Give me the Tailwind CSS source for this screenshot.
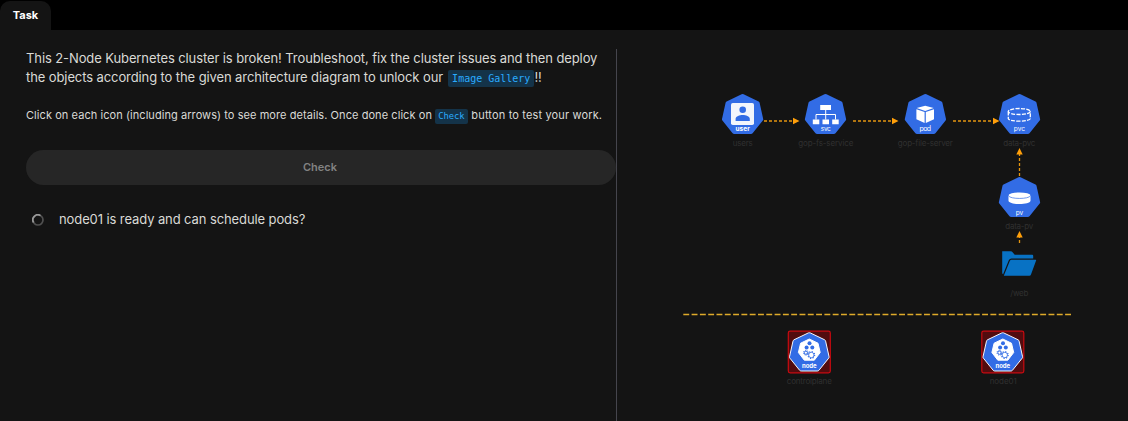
<!DOCTYPE html>
<html lang="en">
<head>
<meta charset="utf-8">
<title>Task</title>
<script src="https://cdn.jsdelivr.net/npm/@tailwindcss/browser@4"></script>
</head>
<body class="h-[421px] overflow-hidden bg-black font-['Inter',sans-serif] text-[#dadad6] flex flex-col">
<header class="h-[30px] shrink-0 flex items-end">
  <div class="h-[29px] w-[51px] rounded-t-[10px] bg-[#141414] flex items-center justify-center text-[11px] font-bold text-white">Task</div>
</header>
<main class="flex-1 flex bg-[#141414] pt-[19px]">
  <section class="w-[617px] shrink-0 pl-[26px] border-r border-[#45454d] flex flex-col">
    <p class="text-[13px] leading-[19px] tracking-[-0.1px] whitespace-nowrap">This 2-Node Kubernetes cluster is broken! Troubleshoot, fix the cluster issues and then deploy<br>the objects according to the given architecture diagram to unlock our <code class="ml-[1.5px] tracking-normal inline-block h-[17px] leading-[17px] px-1 rounded-xs bg-[#143349] text-[#2aabff] text-[10px] font-['DejaVu_Sans_Mono',monospace]">Image Gallery</code>!!</p>
    <p class="mt-[20px] text-[11px] leading-[17px] tracking-[0.065px] whitespace-nowrap">Click on each icon (including arrows) to see more details. Once done click on <code class="tracking-normal inline-block h-[15px] leading-[15px] px-[3px] rounded-xs bg-[#143349] text-[#2aabff] text-[8.8px] font-['DejaVu_Sans_Mono',monospace]">Check</code><span class="ml-[0.5px] tracking-[0.15px]"> button to test your work.</span></p>
    <button class="mt-[26px] h-[35px] w-[590px] rounded-full bg-[#262626] text-[#828282] text-[11px] font-semibold pr-[2px]">Check</button>
    <div class="mt-[25px] flex items-center text-[13px] leading-[19px] tracking-[-0.1px]">
      <svg class="ml-[6px] mr-[15px]" width="12" height="12" viewBox="0 0 12 12" fill="none" stroke-width="1.7"><circle cx="6" cy="6" r="5" stroke="#505050"/><path d="M1.6 8.5A5 5 0 0 1 8.5 1.6" stroke="#999"/></svg>
      <span>node01 is ready and can schedule pods?</span>
    </div>
  </section>
  <svg class="-mt-[19px] h-[391px] w-[511px] font-['Inter',sans-serif]" viewBox="617 30 511 391">
    <defs>
      <path id="hept" d="M0-20.5Q.5-20.5 1-20.3L16-13.1Q16.8-12.6 17-11.7L20.6 4.5Q20.8 5.3 20.2 6L10 18.7Q9.3 19.4 8.4 19.4H-8.4Q-9.3 19.4-10 18.7L-20.2 6Q-20.8 5.3-20.6 4.5L-17-11.7Q-16.8-12.6-16-13.1L-1-20.3Q-.5-20.5 0-20.5Z"/>
      <g id="node">
        <rect x="-21" y="-20.8" width="42" height="41.6" rx="1.8" fill="#520c0f" stroke="#c90a10" stroke-width="1.2"/>
        <use href="#hept" transform="translate(0 .4) scale(.96)" fill="#326ce5" stroke="#fff" stroke-width="1"/>
        <path d="M0-13L8.7-8.8L10.9.5L5 8.2H-5L-10.9.5L-8.7-8.8Z" fill="#fff" stroke="#fff" stroke-linejoin="round"/>
        <g fill="#326ce5"><circle cx=".2" cy="-8.8" r="2"/><circle cx="-2.7" cy="-4.4" r="2"/><circle cx="3" cy="-4.4" r="2"/></g>
        <g fill="none" stroke="#326ce5"><circle cx="-3.4" cy=".7" r="1.6" stroke-width="1"/><circle cx="-3.4" cy=".7" r="2.4" stroke-width="1" stroke-dasharray="1 .88"/><circle cx="2" cy="3" r="2.7" stroke-width=".8"/><circle cx="2" cy="3" r="3.4" stroke-width="1.1" stroke-dasharray="1.2 1.47"/></g>
        <text y="15.8" text-anchor="middle" font-size="6" font-weight="700" fill="#fff">node</text>
      </g>
    </defs>
    <g fill="#326ce5"><use href="#hept" x="742.6" y="114.5"/><use href="#hept" x="825.5" y="114.5"/><use href="#hept" x="925.4" y="114.5"/><use href="#hept" x="1019.5" y="114.5"/><use href="#hept" x="1019.5" y="197.5"/></g>
    <g fill="none" stroke="#e3940f" stroke-width="1.3" stroke-dasharray="3 2"><path d="M764 121H794M853 121H893M953 121H994"/><path d="M1019.5 176V153M1019.5 243V237"/></g>
    <path fill="#ff9f0a" d="M793 117.8L799.5 121L793 124.2ZM892 117.8L898.5 121L892 124.2ZM993 117.8L999.5 121L993 124.2ZM1016.3 154.5L1019.5 148L1022.7 154.5ZM1016.3 237.5L1019.5 231L1022.7 237.5Z"/>
    <!-- user -->
    <rect x="731" y="103" width="23" height="22" rx="1.8" fill="#f2f5fc"/>
    <circle cx="742.7" cy="109.7" r="3.3" fill="#326ce5"/><path d="M735.6 121V118.8C736.4 113.8 749 113.8 749.8 118.8V121Z" fill="#326ce5"/>
    <!-- service -->
    <path d="M820.2 105h10.8v5h-10.8zM812.8 119.5h6.5v4.7h-6.5zM822.5 119.5h6.5v4.7h-6.5zM832.2 119.5h6.5v4.7h-6.5z" fill="#fff"/><path d="M825.7 110V119.5M816 119.5V114.5H835.5V119.5" fill="none" stroke="#fff" stroke-width="1"/>
    <!-- pod -->
    <path d="M916.7 108L925.2 105.8L933.7 108L925.2 110.9ZM916.4 109.2L924.6 111.9V123L916.4 119.2ZM934 109.2L925.8 111.9V123L934 119.2Z" fill="#fff"/>
    <!-- persistent volume claim -->
    <g fill="none" stroke="#fff" stroke-width="1.3" stroke-dasharray="4 1.3"><ellipse cx="1019.3" cy="111.5" rx="11" ry="3"/><path d="M1008.3 111.5V118.7C1009 122 1029.6 122 1030.3 118.7V111.5"/></g>
    <!-- persistent volume -->
    <path d="M1008.5 196V200.8C1009 205.2 1030 205.2 1030.5 200.8V196Z" fill="#fff"/><ellipse cx="1019.5" cy="195.3" rx="11" ry="2.9" fill="#fff"/><path d="M1008.6 195.8C1010 199.3 1029 199.3 1030.4 195.8" fill="none" stroke="#326ce5" stroke-width=".7"/>
    <!-- folder -->
    <path d="M1002.2 251.2H1010.5Q1012 251.2 1012.8 252.4L1014.7 254.7H1032.3Q1033.2 254.7 1033.2 255.7V258.5H1011.5Q1009.6 258.5 1008.8 260.2L1003.1 274.3Q1002.2 273.8 1002.2 272.7Z" fill="#0872c4"/><path d="M1011.4 259.8H1035.8Q1036.4 259.8 1036.1 260.6L1031 274.6Q1030.6 275.8 1029.3 275.8H1003.8L1009.8 260.9Q1010.3 259.8 1011.4 259.8Z" fill="#0872c4"/>
    <g fill="#fff" font-size="6.5" text-anchor="middle"><text x="742.7" y="130.9" font-size="6.5" font-weight="700">user</text><text x="825.8" y="131.2" textLength="10">svc</text><text x="925.3" y="131.2" font-size="7" textLength="11.5">pod</text><text x="1019.4" y="131.3">pvc</text><text x="1019.5" y="214.5">pv</text></g>
    <path d="M683.3 314.5H1071" stroke="#dfaa2a" stroke-width="1.3" stroke-dasharray="5.9 2.4" fill="none"/>
    <use href="#node" x="809.3" y="352"/><use href="#node" x="1002.8" y="352"/>
    <g fill="#303030" font-size="8" text-anchor="middle">
      <text x="742.8" y="146" textLength="20">users</text><text x="825.8" y="146" textLength="55">gop-fs-service</text><text x="925.3" y="146" textLength="55">gop-file-server</text><text x="1019.3" y="146" textLength="32">data-pvc</text><text x="1019.3" y="228.7" textLength="28">data-pv</text><text x="1019.3" y="296" textLength="18">/web</text><text x="809.3" y="384" textLength="45">controlplane</text><text x="1003.2" y="384" textLength="27">node01</text>
    </g>
  </svg>
</main>
</body>
</html>
